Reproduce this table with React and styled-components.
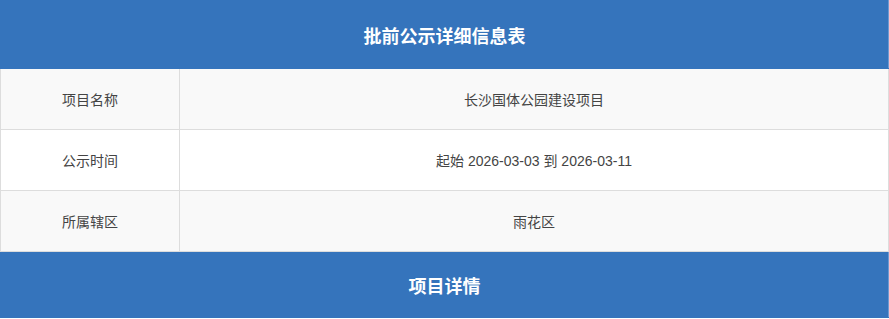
import styled, { createGlobalStyle } from "styled-components";

const GlobalStyle = createGlobalStyle`
  html, body {
    margin: 0;
    padding: 0;
    background: #fff;
  }
  body {
    font-family: "Liberation Sans", "Noto Sans CJK SC", Arial, sans-serif;
  }
`;

const Table = styled.table`
  width: 889px;
  border-collapse: collapse;
  table-layout: fixed;
  border: 1px solid #dddddd;
  font-size: 14px;
  color: #444;
`;

const HeadCell = styled.th`
  height: ${(p) => p.$h || 67}px;
  padding: 0;
  background: #3574bc;
  color: #fff;
  font-size: 18px;
  font-weight: bold;
  text-align: center;
  border: 1px solid #3574bc;
  border-right-color: #6f9ad0;
`;

const Row = styled.tr`
  background: ${(p) => (p.$odd ? "#f9f9f9" : "#ffffff")};
`;

const Label = styled.td`
  height: 60px;
  padding: 0;
  text-align: center;
  border: 1px solid #dddddd;
`;

const Value = styled.td`
  height: 60px;
  padding: 0;
  text-align: center;
  border: 1px solid #dddddd;
`;

const rows = [
  { label: "项目名称", value: "长沙国体公园建设项目" },
  { label: "公示时间", value: "起始 2026-03-03 到 2026-03-11" },
  { label: "所属辖区", value: "雨花区" },
];

const App = () => {
  return (
    <>
      <GlobalStyle />
      <Table>
        <colgroup>
          <col style={{ width: 179 }} />
          <col />
        </colgroup>
        <tbody>
          <tr>
            <HeadCell colSpan={2}>批前公示详细信息表</HeadCell>
          </tr>
          {rows.map((row, i) => (
            <Row key={row.label} $odd={i % 2 === 0}>
              <Label>{row.label}</Label>
              <Value>{row.value}</Value>
            </Row>
          ))}
          <tr>
            <HeadCell colSpan={2} $h={65}>
              项目详情
            </HeadCell>
          </tr>
        </tbody>
      </Table>
    </>
  );
};

export default App;
